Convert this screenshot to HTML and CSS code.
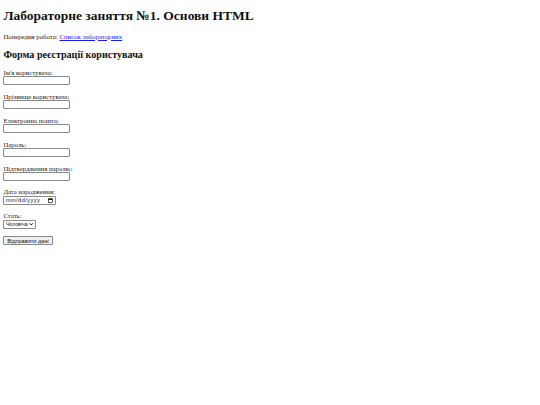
FILE: index.html
```html
<!DOCTYPE html>
<html lang="uk">
<head>
<meta charset="utf-8">
<title>Лабораторне заняття №1</title>
<link rel="stylesheet" href="styles.css">
</head>
<body class="page">
<h1 class="title">Лабораторне заняття №1. Основи HTML</h1>
<p class="prev">Попередня робота: <a class="prev-link" href="#">Список лабораторних</a></p>
<h2 class="subtitle">Форма реєстрації користувача</h2>
<form class="form">
  <div class="field">
    <label class="label" for="fname">Ім'я користувача:</label>
    <input class="input" type="text" id="fname">
  </div>
  <div class="field">
    <label class="label" for="lname">Прізвище користувача:</label>
    <input class="input" type="text" id="lname">
  </div>
  <div class="field">
    <label class="label" for="email">Електронна пошта:</label>
    <input class="input" type="email" id="email">
  </div>
  <div class="field">
    <label class="label" for="pass">Пароль:</label>
    <input class="input" type="password" id="pass">
  </div>
  <div class="field">
    <label class="label" for="pass2">Підтвердження паролю:</label>
    <input class="input" type="password" id="pass2">
  </div>
  <div class="field">
    <label class="label" for="dob">Дата народження:</label>
    <span class="date" id="dob"><span class="date-text">mm/dd/yyyy</span><svg class="cal" viewBox="0 0 10 10" width="5" height="5"><rect x="1" y="1.5" width="8" height="7.5" fill="none" stroke="#000" stroke-width="1.2"/><rect x="1" y="1.5" width="8" height="2.2" fill="#000"/></svg></span>
  </div>
  <div class="field">
    <label class="label" for="sex">Стать:</label>
    <span class="select" id="sex"><span class="select-text">Чоловіча</span><svg class="chev" viewBox="0 0 10 10" width="4.5" height="4.5"><path d="M1.5 3 L5 6.5 L8.5 3" fill="none" stroke="#000" stroke-width="2.2"/></svg></span>
  </div>
  <div class="field">
    <button class="btn" type="button">Відправити дані</button>
  </div>
</form>
</body>
</html>
```
FILE: styles.css
```css
.page {
  margin: 0;
  padding: 0 3.4px;
  font-family: "Liberation Serif", "Times New Roman", serif;
  color: #111;
  background: #fff;
}
.title {
  margin: 8.2px 0 0;
  font-size: 13.5px;
  line-height: 15.6px;
  font-weight: bold;
}
.prev {
  margin: 9px 0 0;
  font-size: 6.75px;
  line-height: 7.8px;
}
.prev-link {
  color: #1a1aee;
  text-decoration: underline;
}
.subtitle {
  margin: 8.4px 0 0;
  font-size: 10.1px;
  line-height: 11.6px;
  font-weight: bold;
}
.form {
  margin-top: 8px;
}
.field {
  display: flex;
  flex-direction: column;
  align-items: flex-start;
  margin-bottom: 7.3px;
}
.label {
  font-size: 6.75px;
  line-height: 7.8px;
  color: #222;
}
.input,
.date,
.select {
  box-sizing: border-box;
  height: 8.9px;
  margin: 0;
  border: 1px solid #8a8a8a;
  border-radius: 1px;
  background: #fff;
  font-family: "Liberation Sans", Arial, sans-serif;
  font-size: 5.6px;
  line-height: 6.5px;
  color: #111;
}
.input {
  width: 67px;
  padding: 0;
}
.date {
  width: 53px;
  display: flex;
  align-items: center;
  justify-content: space-between;
  padding: 0 2.5px 0 1.5px;
}
.date-text {
  letter-spacing: 0.45px;
}
.select {
  width: 33px;
  display: flex;
  align-items: center;
  justify-content: space-between;
  padding: 0 1.5px 0 1.5px;
  font-size: 5.2px;
}
.btn {
  box-sizing: border-box;
  height: 9px;
  margin: 0;
  padding: 0 2.8px;
  border: 1px solid #8a8a8a;
  border-radius: 1px;
  background: #efefef;
  font-family: "Liberation Sans", Arial, sans-serif;
  font-size: 5.6px;
  line-height: 6.5px;
  color: #111;
}
```
